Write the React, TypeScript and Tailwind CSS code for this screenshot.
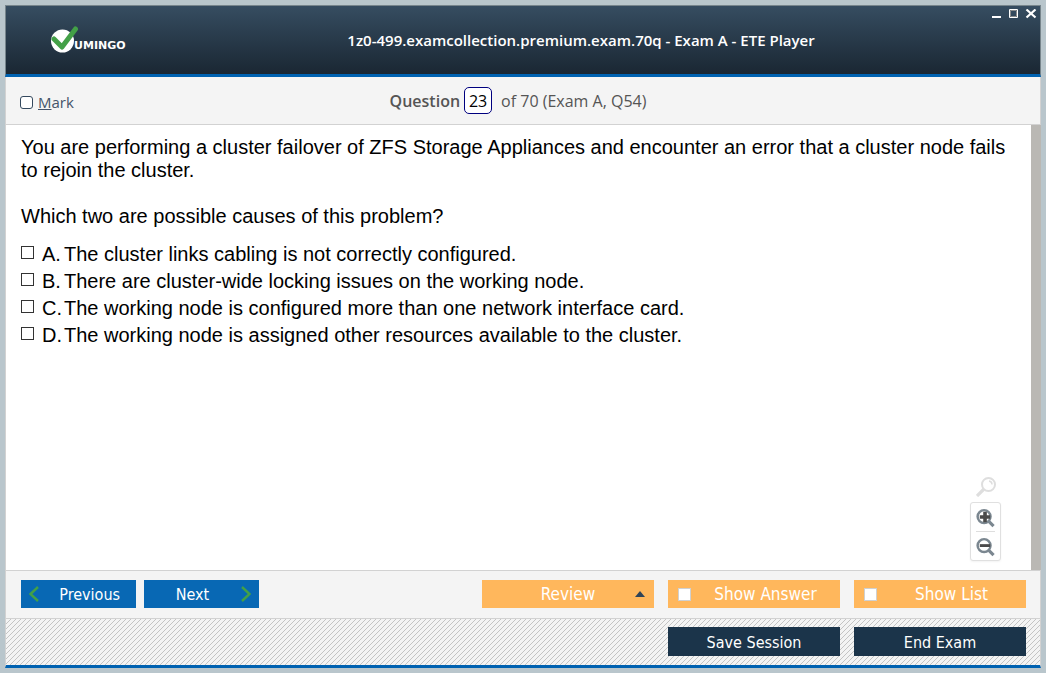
import { useState } from "react";

const answers = [
  { key: "A", text: "The cluster links cabling is not correctly configured." },
  { key: "B", text: "There are cluster-wide locking issues on the working node." },
  { key: "C", text: "The working node is configured more than one network interface card." },
  { key: "D", text: "The working node is assigned other resources available to the cluster." },
];

function Logo() {
  return (
    <svg width="84" height="28" viewBox="0 0 84 28" role="img" aria-label="Vumingo">
      <circle cx="12.500" cy="15" r="11.5" fill="#fff" />
      <path d="M4 13L12 21L25.500 3" fill="none" stroke="#43a047" strokeWidth="5" strokeLinecap="round" strokeLinejoin="round" />
      <text x="24" y="23" className="fill-white font-['DejaVu_Sans'] text-[11px] font-bold">UMINGO</text>
    </svg>
  );
}

function Header() {
  return (
    <header className="relative flex h-[72px] items-center border border-b-[3px] border-[#77858c] border-b-[#0062b1] bg-linear-to-b from-[#364d61] to-[#1a2733] px-11">
      <div className="flex-1">
        <Logo />
      </div>
      <h1 className="ml-[116px] font-['Open_Sans',sans-serif] text-[15px] font-semibold text-white">
        1z0-499.examcollection.premium.exam.70q - Exam A - ETE Player
      </h1>
      <div className="flex-1" />
      <div className="absolute top-[3px] right-[3px] flex gap-[5px] text-white">
        <button aria-label="Minimize" className="size-3">
          <svg width="12" height="12" viewBox="0 0 12 12"><path d="M1 7h9v2H1z" fill="currentColor" /></svg>
        </button>
        <button aria-label="Maximize" className="size-3">
          <svg width="12" height="12" viewBox="0 0 12 12">
            <path d="M1.5 .5h8v8h-8z" fill="none" stroke="currentColor" />
            <path d="M2.5 1.5h6v6h-6z" fill="none" stroke="#8b8b8b" />
          </svg>
        </button>
        <button aria-label="Close" className="size-3">
          <svg width="12" height="12" viewBox="0 0 12 12"><path d="M1.5 .5l9 8M10.5 .5l-9 8" fill="none" stroke="currentColor" strokeWidth="2.2" /></svg>
        </button>
      </div>
    </header>
  );
}

function QuestionBar() {
  return (
    <div className="flex h-12 items-center border-x border-b border-[#d2d2d2] bg-[#f4f4f4] pr-6 pl-3.5 font-['Open_Sans',sans-serif] text-base text-[#555]">
      <label className="flex flex-1 items-center gap-[5px] pt-1 text-[15px] text-[#44546a]">
        <input type="checkbox" className="size-[13px] appearance-none rounded-[3px] border border-[#34495e] bg-white checked:bg-[#34495e]" />
        <span><u>M</u>ark</span>
      </label>
      <label htmlFor="number" className="mr-1 font-semibold">Question</label>
      <input id="number" defaultValue="23" className="h-[27px] w-7 rounded-[5px] border border-[#00007f] bg-white text-center text-base text-black" />
      <span className="ml-[9px]">of 70 (Exam A, Q54)</span>
      <div className="flex-1" />
    </div>
  );
}

function Lens({ sign }: { sign: "plus" | "minus" }) {
  return (
    <svg width="20" height="20" viewBox="0 0 20 20" fill="none">
      <circle cx="8.5" cy="8.5" r="6.8" stroke="#7b8790" strokeWidth="2.6" />
      <path d="M13.5 13.5l5 5" stroke="#7b8790" strokeWidth="3.4" />
      <path d={sign === "plus" ? "M4 9h11M9.500 3.500v11" : "M4 8.500h11"} stroke="#4a4a4a" strokeWidth={sign === "plus" ? 3.8 : 3} />
    </svg>
  );
}

function ZoomTools() {
  return (
    <div className="absolute right-[30px] bottom-[9px] flex w-[31px] flex-col items-center gap-[5px]">
      <button aria-label="Reset zoom">
        <svg width="20" height="20" viewBox="0 0 20 20" fill="none" stroke="#dedede">
          <circle cx="12.5" cy="7.5" r="6.5" strokeWidth="2" />
          <path d="M8 12l-7 7" strokeWidth="3.2" />
          <path d="M13 4q3 .5 3 3.500" strokeWidth="1.4" />
        </svg>
      </button>
      <div className="flex w-full flex-col items-center rounded-[3px] border border-[#e0e0e0] bg-white px-[5px] shadow-xs">
        <button aria-label="Zoom in" className="flex h-7 w-full items-center justify-center pt-0.5"><Lens sign="plus" /></button>
        <button aria-label="Zoom out" className="flex h-[29px] w-full items-center justify-center border-t border-[#dedede] pt-0.5"><Lens sign="minus" /></button>
      </div>
    </div>
  );
}

function ToggleButton({ label }: { label: string }) {
  const [on, setOn] = useState(false);
  return (
    <label className="flex h-7 w-[172px] items-center bg-[#ffb75c] pl-2.5 text-white">
      <input type="checkbox" checked={on} onChange={() => setOn(!on)} className="size-[13px] appearance-none border border-[#d0d0d0] bg-white checked:bg-[#34495e]" />
      <span className="flex-1 pt-0.5 text-center">{label}</span>
    </label>
  );
}

export default function App() {
  return (
    <div className="flex min-h-screen flex-col bg-[#b9c6cc] p-[5px]">
      <div className="flex flex-1 flex-col">
        <Header />
        <QuestionBar />
        <main className="flex flex-1 border-b border-l border-[#d2d2d2] bg-white">
          <div className="relative flex-1 pt-[11px] pr-3 pl-[15px] font-['Liberation_Sans',sans-serif] text-xl leading-[23px] text-black">
            <p>
              You are performing a cluster failover of ZFS Storage Appliances and encounter an error that a cluster node fails to rejoin the cluster.
            </p>
            <p className="mt-[23px]">Which two are possible causes of this problem?</p>
            <ul className="mt-[13px]">
              {answers.map((a) => (
                <li key={a.key}>
                  <label className="flex h-[27px] items-center">
                    <input type="checkbox" className="mr-2 mb-1 size-[13px] appearance-none border border-[#333] bg-white checked:bg-[#333]" />
                    <span className="w-[22px]">{a.key}.</span>
                    <span>{a.text}</span>
                  </label>
                </li>
              ))}
            </ul>
            <ZoomTools />
          </div>
          <div className="w-2.5 bg-[#bab8b4]" />
        </main>
        <footer className="font-['DejaVu_Sans_Condensed','DejaVu_Sans',sans-serif] text-base text-white">
          <div className="flex h-12 items-center gap-2 border-x border-b border-[#d2d2d2] bg-[#f4f4f4] pr-3.5 pb-px pl-[15px]">
            <button className="flex h-7 w-[115px] items-center bg-[#0868b4] px-2">
              <svg width="10" height="16" viewBox="0 0 10 16"><path d="M9 1L1.500 8L9 15" fill="none" stroke="#43a047" strokeWidth="2.400" /></svg>
              <span className="flex-1 pt-0.5 pr-2 text-right">Previous</span>
            </button>
            <button className="flex h-7 w-[115px] items-center bg-[#0868b4] px-2">
              <span className="flex-1 pt-0.5 pr-2 text-center">Next</span>
              <svg width="10" height="16" viewBox="0 0 10 16"><path d="M1 1L8.500 8L1 15" fill="none" stroke="#43a047" strokeWidth="2.400" /></svg>
            </button>
            <div className="ml-auto flex gap-3.5 text-[17px]">
              <button className="relative h-7 w-[172px] bg-[#ffb75c] pt-0.5">
                Review
                <svg className="absolute top-[11px] right-[9px]" width="10" height="6" viewBox="0 0 10 6"><path d="M5 0L10 6H0z" fill="#2f4357" /></svg>
              </button>
              <ToggleButton label="Show Answer" />
              <ToggleButton label="Show List" />
            </div>
          </div>
          <div className="flex h-[49px] items-center justify-end gap-3.5 border-x border-b-[3px] border-[#d2d2d2] border-b-[#0062b1] bg-[#f4f4f4] bg-[linear-gradient(135deg,transparent_44%,#c4c4c4_44%,#c4c4c4_56%,transparent_56%)] bg-size-[5px_5px] px-3.5 pb-px">
            <button className="h-[29px] w-[172px] bg-[#1b344a] pt-0.5">Save Session</button>
            <button className="h-[29px] w-[172px] bg-[#1b344a] pt-0.5">End Exam</button>
          </div>
        </footer>
      </div>
    </div>
  );
}
